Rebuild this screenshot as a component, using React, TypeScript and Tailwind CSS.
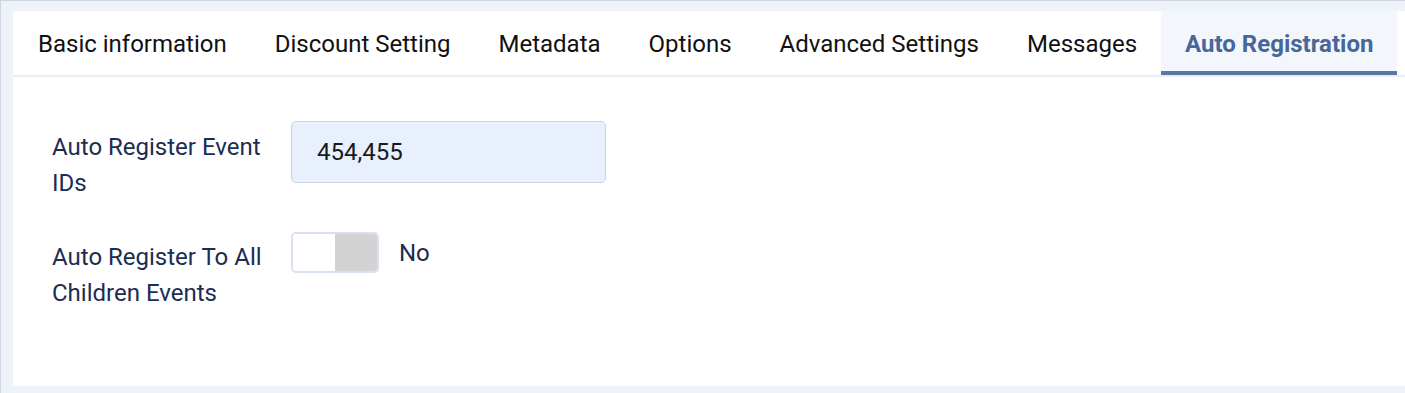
const tabs = [
  'Basic information',
  'Discount Setting',
  'Metadata',
  'Options',
  'Advanced Settings',
  'Messages',
  'Auto Registration',
];

const App = () => {
  const active = 'Auto Registration';

  return (
    <div
      className="h-[393px] w-[1405px] overflow-hidden border-t border-l border-[#cfd6e0] bg-[#eef3fa] pt-[10px] pl-[12px]"
      style={{ fontFamily: 'Roboto, "Noto Sans", sans-serif' }}
    >
      <div className="w-[1400px] rounded-tl-[3px] bg-white">
        <div className="flex h-[66px] border-b-2 border-[#e9eef5] pl-px">
          {tabs.map((t) =>
            t === active ? (
              <div
                key={t}
                className="flex h-[64px] items-center border-b-4 border-[#5b78a3] bg-[#f3f6fa] px-[24px] pt-[5px] text-[24px] font-bold text-[#47669a]"
              >
                {t}
              </div>
            ) : (
              <div
                key={t}
                className="flex h-[64px] items-center px-[24px] pt-px text-[24px] text-[#111111]"
              >
                {t}
              </div>
            )
          )}
        </div>

        <div className="flex flex-col gap-[31px] pt-[44px] pb-[75px] pl-[39px]">
          <div className="flex">
            <label className="w-[239px] pt-[8px] text-[24px] leading-[36px] text-[#1b2d52]">
              Auto Register Event
              <br />
              IDs
            </label>
            <input
              defaultValue="454,455"
              className="h-[62px] w-[315px] rounded-[5px] border border-[#c9d4e3] bg-[#e8f0fe] px-[25px] text-[24px] text-[#1a1a1a] outline-none"
            />
          </div>

          <div className="flex">
            <label className="w-[239px] pt-[7px] text-[24px] leading-[36px] text-[#1b2d52]">
              Auto Register To All
              <br />
              Children Events
            </label>
            <div className="flex h-[41px] items-center gap-[20px]">
              <div className="flex h-[41px] w-[88px] overflow-hidden rounded-[5px] border-2 border-[#d6e2f0]">
                <div className="w-1/2 bg-white" />
                <div className="w-1/2 bg-[#d3d3d3]" />
              </div>
              <span className="text-[24px] text-[#1b2d52]">No</span>
            </div>
          </div>
        </div>
      </div>
    </div>
  );
};

export default App;
